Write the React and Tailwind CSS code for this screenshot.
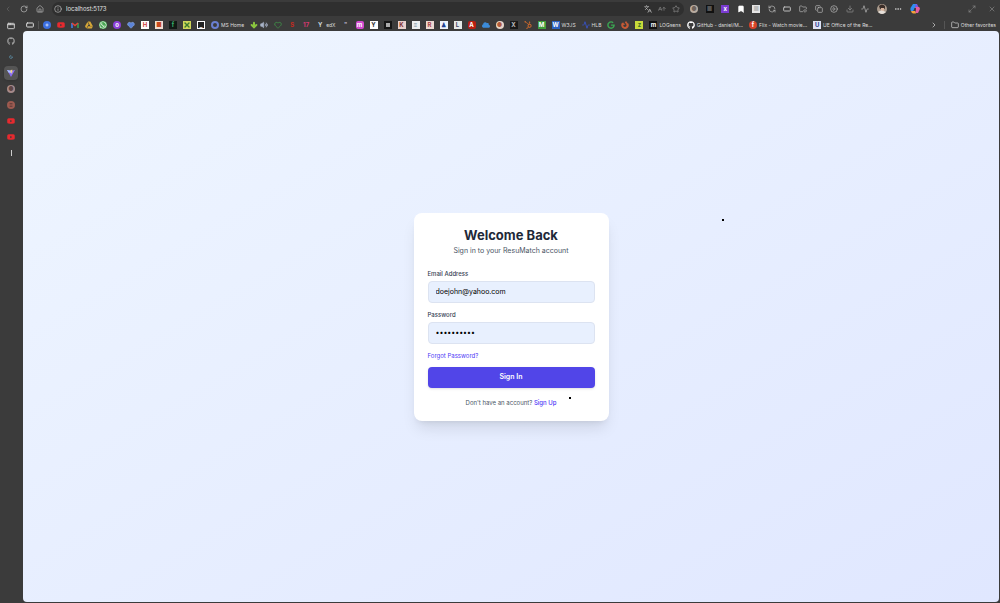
import { useState } from 'react';
import {
  ChevronLeft, ChevronRight, RotateCw, House, Info, Languages, Star, AArrowUp,
  Bookmark, RefreshCcw, RectangleHorizontal, FolderHeart, Copy, CirclePlay, Download, Activity,
  Ellipsis, X, Maximize2, AppWindow, Plus, Folder, Moon, Volume2, Heart, ArrowDown,
} from 'lucide-react';
import {
  FaGithub, FaYoutube, FaWhatsapp, FaGoogleDrive, FaCloud, FaGoogle, FaFirefoxBrowser, FaHubspot,
} from 'react-icons/fa6';

const Tile = ({ className, children }) => (
  <span className={`flex size-2 items-center justify-center text-[6px] leading-none font-bold ${className}`}>
    {children}
  </span>
);

const YouTube = () => <FaYoutube className="size-2 text-[#e62a2f]" />;

const Gmail = () => (
  <svg viewBox="0 0 8 8" className="size-2" fill="none" strokeWidth="1.5">
    <path d="M1 7V2" stroke="#4285f4" />
    <path d="M7 7V2" stroke="#34a853" />
    <path d="M1 2l3 2.5L7 2" stroke="#e04436" />
  </svg>
);

const Vite = () => (
  <svg viewBox="0 0 8 8" className="size-2">
    <path d="M0 1l4 7 4-7-4 .8z" fill="#8b6cf5" />
    <path d="M0 1l4 .8V4L1.500 3.500z" fill="#a9c4ff" />
    <path d="M3.500 1l2-.3L5 2.500h.8L4 5l.2-1.800h-.7z" fill="#f3d68a" />
  </svg>
);

const Copilot = () => (
  <svg viewBox="0 0 10 10" className="size-[10px]">
    <path d="M3 0h3.500L5 4 3 7H1Q0 6 .5 4z" fill="#2f8df0" />
    <path d="M6 0h1l1.500 3H5z" fill="#7a55e8" />
    <path d="M5 3h4q1.500 1 .5 3L8 9H5l1-3z" fill="#e45ca0" />
    <path d="M1 7h4l1 2.500H3Q1.500 9 1 7z" fill="#f0a238" />
    <path d="M4.500 4h1.500L5.500 6H4z" fill="#3b3b3b" />
  </svg>
);

const Avatar = () => (
  <svg viewBox="0 0 10 10" className="size-[10px]">
    <circle cx="5" cy="5" r="5" fill="#a99a8c" />
    <path d="M2 2q3-3 6 0v3L6 4 3 5z" fill="#3a2d28" />
    <path d="M4 4h3v3H4z" fill="#d8b39c" />
    <path d="M1 8q3-3 8 0-4 4-8 0z" fill="#e6e0da" />
  </svg>
);

const bookmarks = [
  { icon: <Tile className="rounded-full bg-[#3b6fe0] text-white"><Plus className="size-1" strokeWidth={4} /></Tile> },
  { icon: <YouTube /> },
  { icon: <Gmail /> },
  { icon: <FaGoogleDrive className="size-2 text-[#d5a637]" /> },
  { icon: <FaWhatsapp className="size-2 rounded-full bg-[#4aa554] text-white" /> },
  { icon: <Tile className="rounded-full bg-[#8b3fd8] text-white">o</Tile> },
  { icon: <Heart className="size-2 fill-[#5b84d8] text-[#8aa6e0]" /> },
  { icon: <Tile className="bg-white text-[#cc3b3b]">H</Tile> },
  { icon: <Tile className="bg-[#f2ddd0] text-[#c8481d]">■</Tile> },
  { icon: <Tile className="bg-[#111915] text-[#38b26b]">f</Tile> },
  { icon: <Tile className="bg-[#cfd65a] text-[#3d7a2f]"><X className="size-2" strokeWidth={4} /></Tile> },
  { icon: <Tile className="border border-white bg-[#222] text-white">_</Tile> },
  { icon: <Tile className="rounded-full border-2 border-[#6a7fd0]" />, label: 'MS Home' },
  { icon: <ArrowDown className="-mr-1 size-2 text-[#8ac53e]" strokeWidth={6} /> },
  { icon: <Volume2 className="size-2 fill-[#a9b4c8] text-[#a9b4c8]" /> },
  { icon: <Heart className="size-2 text-[#3f8046]" strokeWidth={3} /> },
  { icon: <Tile className="text-[#c42a20]">S</Tile> },
  { icon: <Tile className="text-[#d63870]">17</Tile> },
  { icon: <Tile className="text-[#c9d4d8]">Y</Tile>, label: 'edX' },
  { icon: <Tile className="text-[#b7b7cc]">"</Tile> },
  { icon: <Tile className="rounded-xs bg-[#d24bd0] text-white">m</Tile> },
  { icon: <Tile className="bg-white text-[#333]">Y</Tile> },
  { icon: <Tile className="border-2 border-[#151515] bg-[#aaa]" /> },
  { icon: <Tile className="bg-[#e9cfcb] text-[#7e2c2c]">K</Tile> },
  { icon: <Tile className="bg-[#eceff0] text-[#6b8794]">≡</Tile> },
  { icon: <Tile className="bg-[#ecd9d3] text-[#a84343]">R</Tile> },
  { icon: <Tile className="bg-[#edf2fa] text-[#20408f]">♟</Tile> },
  { icon: <Tile className="bg-[#e4e8e8] text-[#446]">L</Tile> },
  { icon: <Tile className="rounded-xs bg-[#b91d12] text-white">A</Tile> },
  { icon: <FaCloud className="size-2 text-[#3c8bd8]" /> },
  { icon: <Tile className="rounded-full bg-[#e8d6c8] text-[#b05a3c]">●</Tile> },
  { icon: <Tile className="bg-[#191919] text-[#bbb]">X</Tile> },
  { icon: <FaHubspot className="size-2 text-[#cf6a2c]" /> },
  { icon: <Tile className="bg-[#3f9d3a] text-white">M</Tile> },
  { icon: <Tile className="bg-[#2d62c0] text-white">W</Tile>, label: 'W3JS' },
  { icon: <Activity className="size-2 text-[#3950b4]" strokeWidth={3} />, label: 'HLB' },
  { icon: <FaGoogle className="size-2 text-[#3ba552]" /> },
  { icon: <FaFirefoxBrowser className="size-2 text-[#c65a35]" /> },
  { icon: <Tile className="bg-[#c9dc3b] text-[#3c6b22]">z</Tile> },
  { icon: <Tile className="bg-[#111] text-white">m</Tile>, label: 'LOGsens' },
  { icon: <FaGithub className="size-2 text-white" />, label: 'GitHub - daniel/M...' },
  { icon: <Tile className="rounded-full bg-[#d6432a] text-white">f</Tile>, label: 'Flix - Watch movie...' },
  { icon: <Tile className="bg-[#dfe3f5] text-[#27348b]">U</Tile>, label: 'UE Office of the Re...' },
];

const extensions = [
  { name: 'Cookies', icon: <Tile className="rounded-full bg-[#b9aca0] text-[#6e635b]">●</Tile> },
  { name: 'Dark mode', icon: <Tile className="bg-[#111] text-[#555]">■</Tile> },
  { name: 'Notes', icon: <Tile className="bg-[#7a3bd0] text-white">x</Tile> },
  { name: 'Reading list', icon: <Bookmark className="size-2 fill-white text-white" /> },
  { name: 'Capture', icon: <Tile className="bg-[#e4e4e4] text-[#bbb]">■</Tile> },
  { name: 'Sync', icon: <RefreshCcw className="size-2" /> },
  { name: 'Split screen', icon: <RectangleHorizontal className="size-2" strokeWidth={3} /> },
  { name: 'Favorites', icon: <FolderHeart className="size-2" /> },
  { name: 'Collections', icon: <Copy className="size-2" /> },
  { name: 'Media', icon: <CirclePlay className="size-2" /> },
  { name: 'Downloads', icon: <Download className="size-2 opacity-70" /> },
  { name: 'Performance', icon: <Activity className="size-2" /> },
  { name: 'Profile', icon: <Avatar /> },
  { name: 'Settings', icon: <Ellipsis className="size-2" strokeWidth={3} /> },
  { name: 'Copilot', icon: <Copilot /> },
];

const tabs = [
  { name: 'GitHub', icon: <FaGithub className="size-2 text-[#999]" /> },
  { name: 'Night', icon: <Moon className="size-1 text-[#5f8fa8]" strokeWidth={4} /> },
  { name: 'ResuMatch', icon: <Vite />, active: true },
  { name: 'Profile page', icon: <Tile className="rounded-full bg-[#a68a8a] text-[#604646]">●</Tile> },
  { name: 'Forum', icon: <Tile className="rounded-full bg-[#9c5a50] text-[#442a2a]">≡</Tile> },
  { name: 'YouTube', icon: <YouTube /> },
  { name: 'YouTube Music', icon: <YouTube /> },
];

const IconButton = ({ name, className = '', children }) => (
  <button type="button" aria-label={name} className={`flex items-center justify-center ${className}`}>
    {children}
  </button>
);

const Toolbar = () => (
  <header className="flex h-[18px] items-center px-1 text-[#bdbdbd]">
    <div className="flex items-center gap-2 pr-2">
      <IconButton name="Back"><ChevronLeft className="size-2 text-[#666]" /></IconButton>
      <IconButton name="Refresh"><RotateCw className="size-2" /></IconButton>
      <IconButton name="Home"><House className="size-2" /></IconButton>
    </div>
    <div className="flex h-[14px] flex-1 items-center gap-1 rounded-full bg-[#2f2f2f] pr-1 pl-[2px]">
      <Info className="size-2" />
      <input
        aria-label="Address"
        defaultValue="localhost:5173"
        className="min-w-0 flex-1 bg-transparent text-[6px] leading-[8px] text-[#e0e0e0] outline-none"
      />
      <div className="flex items-center gap-[6px]">
        <IconButton name="Translate"><Languages className="size-2" /></IconButton>
        <IconButton name="Read aloud"><AArrowUp className="size-2 opacity-60" /></IconButton>
        <IconButton name="Add to favorites"><Star className="size-2 opacity-70" /></IconButton>
      </div>
    </div>
    <div className="ml-[6px] flex w-[230px] items-center justify-between">
      {extensions.map(({ name, icon }) => (
        <IconButton key={name} name={name}>{icon}</IconButton>
      ))}
    </div>
    <div className="ml-12 flex items-center gap-3">
      <IconButton name="Maximize"><Maximize2 className="size-2 opacity-60" /></IconButton>
      <IconButton name="Close"><X className="size-2 opacity-60" /></IconButton>
    </div>
  </header>
);

const BookmarksBar = () => (
  <nav className="flex h-[13px] items-center gap-[6px] px-1 text-[5px] leading-[8px] whitespace-nowrap text-[#dedede]">
    <IconButton name="Workspace"><RectangleHorizontal className="size-2" strokeWidth={3} /></IconButton>
    <span className="-mx-[2px] h-2 w-px bg-[#555]" />
    {bookmarks.map(({ icon, label }, index) => (
      <a key={index} href="#" aria-label={label || 'Bookmark'} className="flex shrink-0 items-center gap-[2px]">
        {icon}
        {label && <span>{label}</span>}
      </a>
    ))}
    <div className="ml-auto flex shrink-0 items-center gap-[6px]">
      <IconButton name="More bookmarks"><ChevronRight className="size-2" /></IconButton>
      <span className="h-2 w-px bg-[#555]" />
      <a href="#" className="flex items-center gap-[2px]">
        <Folder className="size-2" />
        Other favorites
      </a>
    </div>
  </nav>
);

const Sidebar = () => (
  <aside className="flex w-[22px] shrink-0 flex-col items-center text-[#c8c8c8]">
    <IconButton name="Tab actions" className="h-[15px] w-4"><AppWindow className="size-2" strokeWidth={3} /></IconButton>
    {tabs.map(({ name, icon, active }) => (
      <IconButton
        key={name}
        name={name}
        className={active ? 'my-px h-[14px] w-[14px] rounded-sm bg-[#555] shadow-sm' : 'h-4 w-4'}
      >
        {icon}
      </IconButton>
    ))}
    <IconButton name="New tab" className="h-4 w-4"><span className="h-[6px] w-px bg-[#ccc]" /></IconButton>
  </aside>
);

const Field = ({ id, label, ...props }) => (
  <div className="mb-2">
    <label htmlFor={id} className="block text-[6px] leading-[8px] font-medium text-gray-700">{label}</label>
    <input
      id={id}
      className="mt-[3px] block h-[22px] w-full rounded-sm border border-[#dce3f1] bg-[#e8f0fe] px-[7px] text-[7px] text-black outline-none"
      {...props}
    />
  </div>
);

const LoginCard = () => {
  const [email, setEmail] = useState('doejohn@yahoo.com');
  const [password, setPassword] = useState('password12');

  return (
    <form
      onSubmit={(e) => e.preventDefault()}
      className="w-[195px] rounded-lg bg-white px-[14px] py-[13px] shadow-lg"
    >
      <h1 className="text-center text-[13px] leading-[18px] font-bold text-gray-800">Welcome Back</h1>
      <p className="mt-[2px] mb-[14px] text-center text-[7px] leading-[10px] text-gray-600">
        Sign in to your ResuMatch account
      </p>
      <Field id="email" label="Email Address" type="email" value={email} onChange={(e) => setEmail(e.target.value)} />
      <Field id="password" label="Password" type="password" value={password} onChange={(e) => setPassword(e.target.value)} />
      <a href="#" className="block text-[6px] leading-[8px] text-indigo-600">Forgot Password?</a>
      <button
        type="submit"
        className="mt-[7px] block h-[21px] w-full rounded-sm bg-[#5145e8] text-[7px] font-semibold text-white shadow-sm"
      >
        Sign In
      </button>
      <p className="mt-[10px] text-center text-[6px] leading-[10px] text-gray-600">
        Don't have an account? <a href="#" className="font-medium text-indigo-600">Sign Up</a>
      </p>
    </form>
  );
};

export default function App() {
  return (
    <div className="relative flex min-h-screen flex-col bg-[#3b3b3b] font-['Inter','Liberation_Sans',sans-serif]">
      <Toolbar />
      <div className="flex flex-1">
        <Sidebar />
        <div className="flex min-w-0 flex-1 flex-col">
          <BookmarksBar />
          <main className="mr-px mb-px ml-px flex flex-1 items-center justify-center rounded-sm bg-linear-to-br from-blue-50 to-indigo-100">
            <LoginCard />
          </main>
        </div>
      </div>
      <span className="absolute top-[219px] left-[722px] size-[2px] bg-black" />
      <span className="absolute top-[397px] left-[569px] size-[2px] bg-black" />
    </div>
  );
}
